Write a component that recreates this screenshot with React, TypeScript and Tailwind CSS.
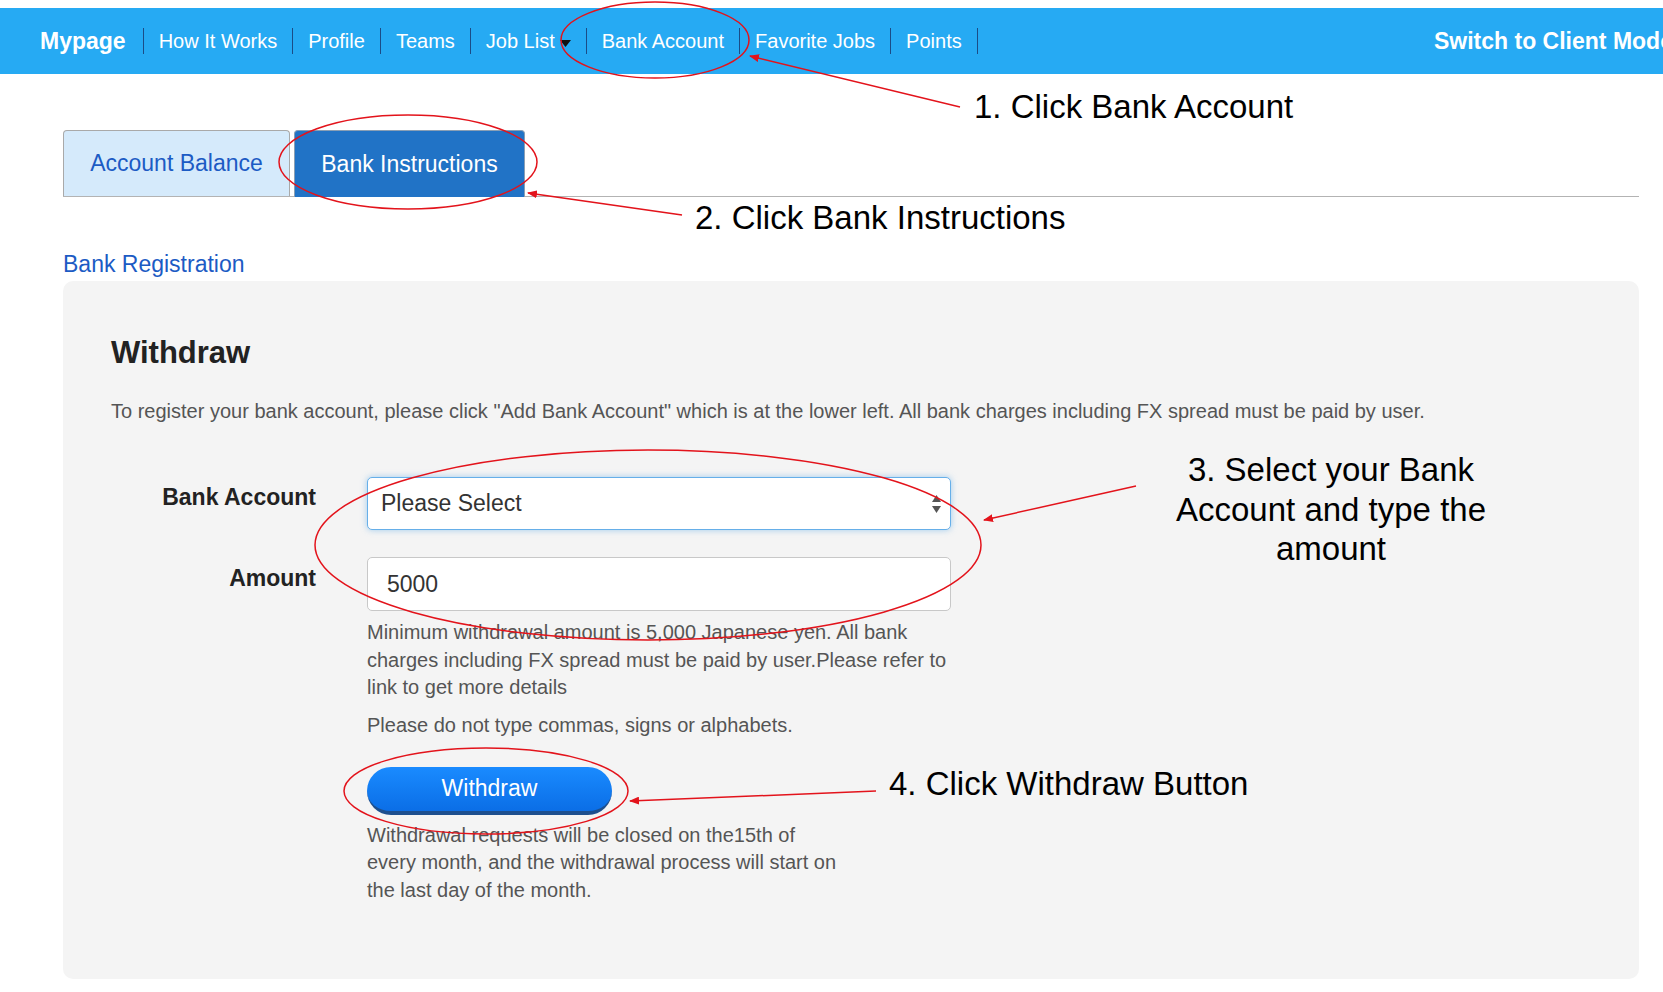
import React from 'react';

const navItems = ['How It Works', 'Profile', 'Teams', 'Job List', 'Bank Account', 'Favorite Jobs', 'Points'];

const Separator = () => <span className="w-px h-[26px] bg-[#1b4c86] mx-[15px] shrink-0" />;

const Annotations = () => (
    <svg className="absolute left-0 top-0 pointer-events-none" width="1663" height="992" viewBox="0 0 1663 992">
        <defs>
            <marker id="arrowhead" markerWidth="10" markerHeight="8" refX="9" refY="4" orient="auto" markerUnits="userSpaceOnUse">
                <path d="M0,0 L10,4 L0,8 z" fill="#e3131b" />
            </marker>
        </defs>
        <g fill="none" stroke="#e3131b" strokeWidth="1.5">
            {/* 1 - nav bank account */}
            <ellipse cx="655" cy="40" rx="94" ry="38" />
            <line x1="960" y1="107" x2="750" y2="56" markerEnd="url(#arrowhead)" />
            {/* 2 - bank instructions tab */}
            <ellipse cx="408" cy="162" rx="129" ry="47" />
            <line x1="682" y1="215" x2="528" y2="193" markerEnd="url(#arrowhead)" />
            {/* 3 - select + amount */}
            <ellipse cx="648" cy="545" rx="333" ry="95" />
            <line x1="1136" y1="486" x2="984" y2="520" markerEnd="url(#arrowhead)" />
            {/* 4 - withdraw button */}
            <ellipse cx="486" cy="791" rx="142" ry="43" />
            <line x1="876" y1="791" x2="630" y2="801" markerEnd="url(#arrowhead)" />
        </g>
    </svg>
);

const App = () => {
    return (
        <div className="relative w-[1663px] h-[992px] bg-white overflow-hidden font-['Liberation_Sans',Arial,sans-serif]">
            {/* Top nav */}
            <nav className="mt-[8px] h-[66px] bg-[#26aaf3] flex items-center pl-[40px] text-white">
                <span className="pr-[2px] text-[23px] font-bold whitespace-nowrap">Mypage</span>
                {navItems.map(item => (
                    <React.Fragment key={item}>
                        <Separator />
                        <span className="text-[20px] whitespace-nowrap flex items-center">
                            {item}
                            {item === 'Job List' && (
                                <svg className="ml-[5px] mt-[4px]" width="11" height="7" viewBox="0 0 11 7">
                                    <path d="M0,0 L11,0 L5.5,7 z" fill="#111" />
                                </svg>
                            )}
                        </span>
                    </React.Fragment>
                ))}
                <Separator />
                <div className="flex-1" />
                <div className="w-[229px] overflow-hidden">
                    <span className="text-[23px] font-bold whitespace-nowrap">Switch to Client Mode</span>
                </div>
            </nav>

            <div className="pl-[63px] pr-[24px]">
                {/* Tabs */}
                <div className="mt-[56px] h-[67px] flex items-end gap-[4px] border-b border-[#b3b3b3]">
                    <div className="w-[227px] h-[66px] flex items-center justify-center bg-[#d5eafb] border border-b-0 border-[#a9a9a9] rounded-t-[4px] text-[23px] text-[#1c5bc4]">
                        Account Balance
                    </div>
                    <div className="w-[231px] h-[67px] -mb-px flex items-center justify-center bg-[#2173c6] border border-b-0 border-[#8a9fb5] rounded-t-[4px] text-[23px] text-white">
                        Bank Instructions
                    </div>
                </div>

                <div className="mt-[53px] text-[23px] leading-[28px] text-[#1c5bc4]">Bank Registration</div>

                {/* Withdraw panel */}
                <div className="mt-[3px] h-[698px] bg-[#f4f4f4] rounded-[10px] pl-[48px] pt-[54px]">
                    <h2 className="text-[31px] leading-[36px] font-bold text-[#222]">Withdraw</h2>
                    <p className="mt-[28px] text-[20px] leading-[24px] text-[#555]">
                        To register your bank account, please click "Add Bank Account" which is at the lower left. All bank charges including FX spread must be paid by user.
                    </p>

                    <div className="mt-[54px] grid grid-cols-[205px_584px] gap-x-[51px]">
                        <div className="pt-[6px] text-right text-[23px] leading-[28px] font-bold text-[#222]">Bank Account</div>
                        <div className="h-[53px] bg-white border border-[#66afe9] rounded-[5px] shadow-[0_0_6px_rgba(102,175,233,0.6)] flex items-center justify-between pl-[13px] pr-[8px]">
                            <span className="text-[23px] text-[#333]">Please Select</span>
                            <svg width="11" height="20" viewBox="0 0 11 20">
                                <path d="M5.5,1 L10,8 L1,8 z" fill="#555" />
                                <path d="M1,12 L10,12 L5.5,19 z" fill="#555" />
                            </svg>
                        </div>

                        <div className="mt-[27px] pt-[7px] text-right text-[23px] leading-[28px] font-bold text-[#222]">Amount</div>
                        <div className="mt-[27px]">
                            <div className="h-[54px] bg-white border border-[#c8c8c8] rounded-[5px] flex items-center pl-[19px]">
                                <span className="text-[23px] text-[#333]">5000</span>
                            </div>
                            <p className="mt-[8px] text-[20px] leading-[27.5px] text-[#555]">
                                Minimum withdrawal amount is 5,000 Japanese yen. All bank charges including FX spread must be paid by user.Please refer to link to get more details
                            </p>
                            <p className="mt-[10px] text-[20px] leading-[27px] text-[#555]">
                                Please do not type commas, signs or alphabets.
                            </p>
                            <button className="mt-[28px] w-[245px] h-[48px] rounded-full bg-gradient-to-b from-[#1a8bff] to-[#0b6ee6] border-b-[4px] border-[#1d4f8e] text-white text-[23px]">
                                Withdraw
                            </button>
                            <p className="mt-[7px] w-[475px] text-[20px] leading-[27.5px] text-[#555]">
                                Withdrawal requests will be closed on the15th of every month, and the withdrawal process will start on the last day of the month.
                            </p>
                        </div>
                    </div>
                </div>
            </div>

            <Annotations />

            {/* Annotation labels */}
            <div className="absolute left-[974px] top-[88px] text-[33px] leading-[38px] text-black whitespace-nowrap">1. Click Bank Account</div>
            <div className="absolute left-[695px] top-[199px] text-[33px] leading-[38px] text-black whitespace-nowrap">2. Click Bank Instructions</div>
            <div className="absolute left-[1111px] top-[450px] w-[440px] text-center text-[33px] leading-[39.5px] text-black">
                3. Select your Bank<br />Account and type the<br />amount
            </div>
            <div className="absolute left-[889px] top-[765px] text-[33px] leading-[38px] text-black whitespace-nowrap">4. Click Withdraw Button</div>
        </div>
    );
};

export default App;
